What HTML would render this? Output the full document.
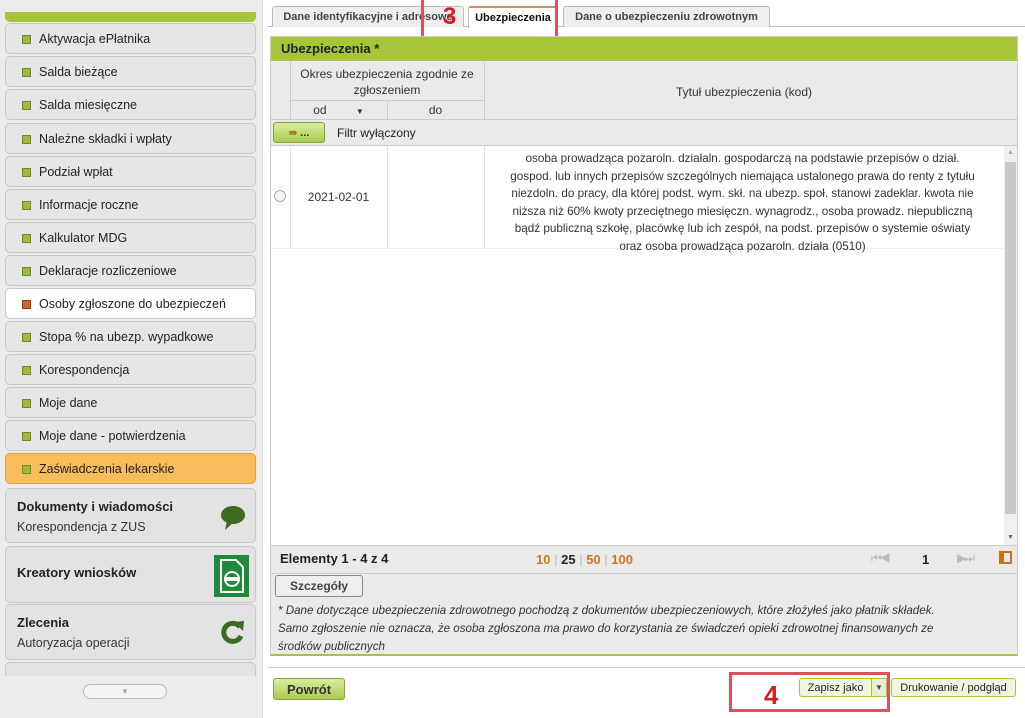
<!DOCTYPE html>
<html><head><meta charset="utf-8"><style>
*{box-sizing:border-box;margin:0;padding:0}
body{width:1025px;height:718px;background:#fff;font-family:"Liberation Sans",Arial,sans-serif;font-size:12px;color:#222;position:relative;overflow:hidden}
.abs{position:absolute}
#side{left:0;top:0;width:263px;height:718px;background:#ececec;border-right:1px solid #ddd}
.item{position:absolute;left:5px;width:251px;height:31px;border:1px solid #c8c8c8;border-radius:5px;background:#e6e6e6;font-size:12.5px;line-height:30px;padding-left:33px}
.item:before{content:"";position:absolute;left:16px;top:11px;width:7px;height:7px;background:#9dbb3a;border:1px solid #6f8a22}
.item.sel{background:#fff}
.item.sel:before{background:#c76a2a;border-color:#8a4010}
.item.org{background:#f8bd5a;border-color:#e0a040}
.big{position:absolute;left:5px;width:251px;border:1px solid #c8c8c8;border-radius:5px;background:#e3e3e3;padding:10px 0 0 11px;font-size:13px}
.big b{display:block;font-size:13px;color:#222}
.big span{display:block;font-size:12.5px;margin-top:6px;color:#333}
.tab{position:absolute;top:6px;height:21px;border:1px solid #bbb;border-bottom:none;border-radius:3px 3px 0 0;background:#eee;font-weight:bold;font-size:11px;color:#444;line-height:20px;text-align:center}
.cell{position:absolute;text-align:center;color:#333}
.btn{position:absolute;border:1px solid #8aa040;border-radius:3px;background:linear-gradient(#d8eea0,#a9cb50);font-weight:bold;font-size:12px;text-align:center;color:#333}
</style></head><body>
<div id="side" class="abs">
 <div class="abs" style="left:5px;top:12px;width:251px;height:10px;background:#a5c63b;border-radius:0 0 5px 5px"></div>
 <div class="item" style="top:23px">Aktywacja ePłatnika</div>
 <div class="item" style="top:56px">Salda bieżące</div>
 <div class="item" style="top:89px">Salda miesięczne</div>
 <div class="item" style="top:123px">Należne składki i wpłaty</div>
 <div class="item" style="top:156px">Podział wpłat</div>
 <div class="item" style="top:189px">Informacje roczne</div>
 <div class="item" style="top:222px">Kalkulator MDG</div>
 <div class="item" style="top:255px">Deklaracje rozliczeniowe</div>
 <div class="item sel" style="top:288px">Osoby zgłoszone do ubezpieczeń</div>
 <div class="item" style="top:321px">Stopa % na ubezp. wypadkowe</div>
 <div class="item" style="top:354px">Korespondencja</div>
 <div class="item" style="top:387px">Moje dane</div>
 <div class="item" style="top:420px">Moje dane - potwierdzenia</div>
 <div class="item org" style="top:453px">Zaświadczenia lekarskie</div>
 <div class="big" style="top:488px;height:55px"><b>Dokumenty i wiadomości</b><span>Korespondencja z ZUS</span>
  <svg class="abs" style="left:213px;top:14px" width="28" height="28" viewBox="0 0 28 28"><ellipse cx="14" cy="12" rx="12" ry="9" fill="#3d6b1f"/><path d="M8 18 L6 27 L14 20Z" fill="#3d6b1f"/></svg></div>
 <div class="big" style="top:546px;height:57px;padding-top:18px"><b>Kreatory wniosków</b>
  <svg class="abs" style="left:208px;top:8px" width="35" height="42" viewBox="0 0 35 42"><rect width="35" height="42" fill="#1e8a3c"/><path d="M7 5h15l7 7v25H7z" fill="none" stroke="#fff" stroke-width="2"/><circle cx="18" cy="24" r="7" fill="none" stroke="#fff" stroke-width="2"/><rect x="10" y="22" width="16" height="4" fill="#fff"/></svg></div>
 <div class="big" style="top:604px;height:56px"><b>Zlecenia</b><span>Autoryzacja operacji</span>
  <svg class="abs" style="left:214px;top:14px" width="26" height="26" viewBox="0 0 26 26"><path d="M20 8 A9 9 0 1 0 21 17" fill="none" stroke="#3d6b1f" stroke-width="5"/><path d="M14 3 L24 2 L23 12Z" fill="#3d6b1f"/></svg></div>
 <div class="big" style="top:662px;height:14px;border-bottom:none;border-radius:5px 5px 0 0"></div>
 <div class="abs" style="left:0;top:676px;width:262px;height:42px;background:#ececec"></div>
 <div class="abs" style="left:83px;top:684px;width:84px;height:15px;border:1px solid #bbb;border-radius:8px;background:#f4f4f4;text-align:center;font-size:8px;color:#aaa;line-height:13px">▼</div>
</div>

<div class="abs" style="left:268px;top:26px;width:757px;height:1px;background:#bbb"></div>
<div class="tab" style="left:272px;width:192px">Dane identyfikacyjne i adresowe</div>
<div class="tab" style="left:468px;width:90px;background:#fff;height:22px;border-top:2px solid #d88a50;color:#111">Ubezpieczenia</div>
<div class="tab" style="left:563px;width:207px">Dane o ubezpieczeniu zdrowotnym</div>
<div class="abs" style="left:421px;top:-3px;width:137px;height:43px;border:3px solid #e0505a"></div>
<div class="abs" style="left:443px;top:5px;color:#d02020;font-weight:bold;font-size:24px;line-height:24px">3</div>

<div class="abs" style="left:270px;top:36px;width:748px;height:620px;background:#eaeaea;border:1px solid #ccc;border-bottom:2px solid #a5c63b">
 <div class="abs" style="left:0;top:0;width:746px;height:24px;background:#a5c63b;font-weight:bold;font-size:13px;line-height:24px;padding-left:10px;color:#222">Ubezpieczenia *</div>
 <div class="abs" style="left:19px;top:24px;width:1px;height:58px;background:#ccc"></div>
 <div class="abs" style="left:19px;top:63px;width:194px;height:1px;background:#ccc"></div>
 <div class="abs" style="left:213px;top:24px;width:1px;height:58px;background:#ccc"></div>
 <div class="abs" style="left:116px;top:63px;width:1px;height:19px;background:#ccc"></div>
 <div class="cell" style="left:19px;top:29px;width:194px;line-height:16px">Okres ubezpieczenia zgodnie ze<br>zgłoszeniem</div>
 <div class="cell" style="left:19px;top:66px;width:97px">od <span style="font-size:8px;margin-left:26px">▼</span></div>
 <div class="cell" style="left:116px;top:66px;width:97px">do</div>
 <div class="cell" style="left:213px;top:48px;width:520px">Tytuł ubezpieczenia (kod)</div>
 <div class="abs" style="left:0;top:82px;width:746px;height:1px;background:#ccc"></div>
 <div class="btn" style="left:2px;top:85px;width:52px;height:21px;line-height:20px;font-size:11px"><span style="color:#a07000;font-size:10px">⇛</span> ...</div>
 <div class="abs" style="left:66px;top:89px">Filtr wyłączony</div>
 <div class="abs" style="left:0;top:108px;width:746px;height:1px;background:#ccc"></div>
 <div class="abs" style="left:0;top:109px;width:733px;height:400px;background:#fff"></div>
 <div class="abs" style="left:19px;top:109px;width:1px;height:102px;background:#e4e4d8"></div>
 <div class="abs" style="left:116px;top:109px;width:1px;height:102px;background:#e4e4d8"></div>
 <div class="abs" style="left:213px;top:109px;width:1px;height:102px;background:#e4e4d8"></div>
 <div class="abs" style="left:0;top:211px;width:733px;height:1px;background:#eee"></div>
 <div class="abs" style="left:3px;top:153px;width:12px;height:12px;border:1px solid #aaa;border-radius:50%;background:#f4f4f4"></div>
 <div class="cell" style="left:19px;top:153px;width:97px">2021-02-01</div>
 <div class="cell" style="left:208px;top:113px;width:527px;line-height:17.6px;white-space:nowrap;overflow:hidden;font-size:11.7px">osoba prowadząca pozaroln. działaln. gospodarczą na podstawie przepisów o dział.<br>gospod. lub innych przepisów szczególnych niemająca ustalonego prawa do renty z tytułu<br>niezdoln. do pracy, dla której podst. wym. skł. na ubezp. społ. stanowi zadeklar. kwota nie<br>niższa niż 60% kwoty przeciętnego miesięczn. wynagrodz., osoba prowadz. niepubliczną<br>bądź publiczną szkołę, placówkę lub ich zespół, na podst. przepisów o systemie oświaty<br>oraz osoba prowadząca pozaroln. działa (0510)</div>
 <div class="abs" style="left:733px;top:109px;width:13px;height:400px;background:#f0f0f0"></div>
 <div class="abs" style="left:734px;top:125px;width:11px;height:352px;background:#c8c8c8"></div>
 <div class="abs" style="left:736px;top:112px;font-size:7px;color:#aaa">▲</div>
 <div class="abs" style="left:736px;top:497px;font-size:7px;color:#666">▼</div>
 <div class="abs" style="left:0;top:508px;width:746px;height:1px;background:#ccc"></div>
 <div class="abs" style="left:9px;top:514px;font-weight:bold;font-size:13px">Elementy 1 - 4 z 4</div>
 <div class="abs" style="left:265px;top:515px;font-weight:bold;font-size:13px;color:#c77a1a">10 <span style="color:#bbb;font-weight:normal">|</span> <span style="color:#222">25</span> <span style="color:#bbb;font-weight:normal">|</span> 50 <span style="color:#bbb;font-weight:normal">|</span> 100</div>
 <div class="abs" style="left:600px;top:514px;font-size:12px;color:#bbb;letter-spacing:-2px">⏮◀</div>
 <div class="abs" style="left:651px;top:515px;font-weight:bold;font-size:13px">1</div>
 <div class="abs" style="left:686px;top:514px;font-size:12px;color:#bbb;letter-spacing:-2px">▶⏭</div>
 <div class="abs" style="left:728px;top:514px;width:13px;height:13px;border:2px solid #d07010;border-left:5px solid #d07010"></div>
 <div class="abs" style="left:0;top:536px;width:746px;height:1px;background:#ccc"></div>
 <div class="abs" style="left:4px;top:538px;width:88px;height:22px;border:1px solid #888;border-radius:3px;background:#eee;font-weight:bold;font-size:12px;text-align:center;line-height:20px;color:#444">Szczegóły</div>
 <div class="abs" style="left:7px;top:565px;width:740px;white-space:nowrap;font-style:italic;font-size:11.6px;line-height:18px;color:#333">* Dane dotyczące ubezpieczenia zdrowotnego pochodzą z dokumentów ubezpieczeniowych, które złożyłeś jako płatnik składek.<br>Samo zgłoszenie nie oznacza, że osoba zgłoszona ma prawo do korzystania ze świadczeń opieki zdrowotnej finansowanych ze<br>środków publicznych</div>
</div>

<div class="abs" style="left:268px;top:667px;width:757px;height:1px;background:#ccc"></div>
<div class="btn" style="left:273px;top:678px;width:72px;height:22px;line-height:21px;font-size:13px">Powrót</div>
<div class="abs" style="left:799px;top:678px;width:73px;height:19px;border:1px solid #a5c63b;border-radius:3px 0 0 3px;background:#f0f4e0;font-size:11px;text-align:center;line-height:18px">Zapisz jako</div>
<div class="abs" style="left:871px;top:678px;width:16px;height:19px;border:1px solid #a5c63b;background:#e8eed4;font-size:8px;text-align:center;line-height:18px;color:#446">▼</div>
<div class="abs" style="left:891px;top:678px;width:125px;height:19px;border:1px solid #a5c63b;border-radius:3px;background:#f0f4e0;font-size:11px;text-align:center;line-height:18px">Drukowanie / podgląd</div>
<div class="abs" style="left:729px;top:672px;width:161px;height:40px;border:3px solid #e0505a"></div>
<div class="abs" style="left:764px;top:682px;color:#d02020;font-weight:bold;font-size:26px;line-height:26px">4</div>
</body></html>
